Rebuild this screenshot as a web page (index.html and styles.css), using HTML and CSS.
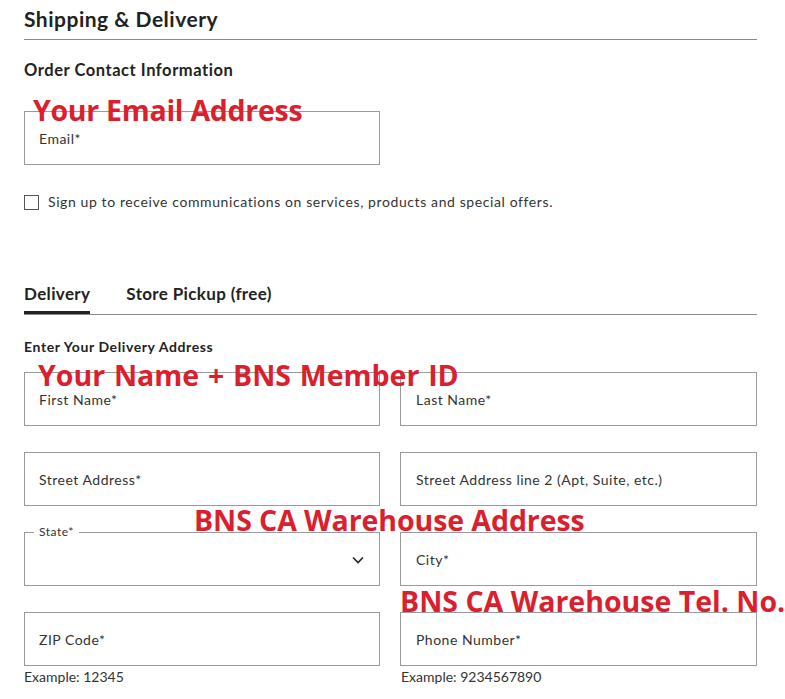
FILE: index.html
```html
<!DOCTYPE html>
<html lang="en">
<head>
<meta charset="utf-8">
<title>Shipping &amp; Delivery</title>
<link rel="stylesheet" href="styles.css">
</head>
<body>
<div class="page">
  <h1 class="title">Shipping &amp; Delivery</h1>
  <h2 class="section">Order Contact Information</h2>
  <div class="field email"><span class="label">Email*</span></div>
  <label class="check"><span class="box"></span><span>Sign up to receive communications on services, products and special offers.</span></label>

  <div class="tabs">
    <div class="tab active">Delivery</div>
    <div class="tab">Store Pickup (free)</div>
  </div>
  <h3 class="sub">Enter Your Delivery Address</h3>

  <div class="grid">
    <div class="field"><span class="label">First Name*</span></div>
    <div class="field right"><span class="label">Last Name*</span></div>
    <div class="field"><span class="label">Street Address*</span></div>
    <div class="field right"><span class="label">Street Address line 2 (Apt, Suite, etc.)</span></div>
    <div class="field select">
      <span class="legend">State*</span>
      <svg class="chev" width="12" height="8" viewBox="0 0 12 8"><polyline points="1,1.5 6,6.5 11,1.5" fill="none" stroke="#222" stroke-width="1.6"/></svg>
    </div>
    <div class="field right"><span class="label">City*</span></div>
    <div class="cell">
      <div class="field"><span class="label">ZIP Code*</span></div>
      <div class="hint">Example: 12345</div>
    </div>
    <div class="cell">
      <div class="field right"><span class="label">Phone Number*</span></div>
      <div class="hint">Example: 9234567890</div>
    </div>
  </div>

  <div class="note n1">Your Email Address</div>
  <div class="note n2">Your Name + BNS Member ID</div>
  <div class="note n3">BNS CA Warehouse Address</div>
  <div class="note n4">BNS CA Warehouse Tel. No.</div>
</div>
</body>
</html>
```

FILE: styles.css
```css
* { box-sizing: border-box; }
html, body { margin: 0; background: #fff; }
body { font-family: "Lato", "Noto Sans", sans-serif; color: #222; }
.page { position: relative; width: 757px; padding: 0 0 0 24px; }

.title {
  margin: 0;
  font-size: 21px;
  font-weight: 700;
  line-height: 24px;
  letter-spacing: 0.5px;
  padding: 7px 0 8px;
  border-bottom: 1px solid #8a8a8a;
  color: #222;
}
.section {
  margin: 20px 0 0;
  font-size: 16.5px;
  font-weight: 700;
  line-height: 20px;
  letter-spacing: 0.55px;
  color: #222;
}
.field {
  position: relative;
  height: 54px;
  border: 1px solid #9a9a9a;
  display: flex;
  align-items: center;
  padding-left: 14px;
}
.field.right { padding-left: 15px; }
.label { font-size: 14px; color: #333; letter-spacing: 0.5px; }
.email { width: 356px; margin-top: 31px; }

.check {
  display: flex;
  align-items: center;
  gap: 9px;
  margin-top: 29px;
  font-size: 14px;
  letter-spacing: 0.6px;
  color: #333;
  line-height: 16px;
}
.box { width: 15px; height: 15px; border: 1px solid #555; flex: none; }

.tabs {
  display: flex;
  gap: 36px;
  margin-top: 74px;
  border-bottom: 1px solid #8a8a8a;
}
.tab {
  font-size: 17px;
  font-weight: 700;
  line-height: 20px;
  letter-spacing: 0.35px;
  padding-bottom: 7px;
  border-bottom: 3px solid transparent;
  color: #222;
}
.tab.active { border-bottom-color: #222; }

.sub {
  margin: 23px 0 0;
  font-size: 14px;
  font-weight: 700;
  line-height: 18px;
  letter-spacing: 0.6px;
  color: #222;
}
.grid {
  margin-top: 16px;
  display: grid;
  grid-template-columns: 356px 357px;
  column-gap: 20px;
  row-gap: 26px;
}
.select { align-items: flex-start; }
.legend {
  position: absolute;
  top: -8px;
  left: 9px;
  padding: 0 5px;
  background: #fff;
  font-size: 12px;
  line-height: 14px;
  letter-spacing: 0.5px;
  color: #333;
}
.chev { position: absolute; right: 15px; top: 23px; }
.hint { margin-top: 3px; font-size: 14px; line-height: 16px; color: #333; }
.right + .hint { padding-left: 1px; }

.note {
  position: absolute;
  font-family: "Open Sans", sans-serif;
  font-weight: 700;
  font-size: 28.5px;
  line-height: 28px;
  letter-spacing: 0;
  color: #da1f2e;
  white-space: nowrap;
}
.n1 { left: 33px; top: 96px; letter-spacing: -0.28px; }
.n2 { left: 38px; top: 361px; word-spacing: 1.4px; }
.n3 { left: 194px; top: 506px; letter-spacing: -0.08px; }
.n4 { left: 400px; top: 587px; }
```
